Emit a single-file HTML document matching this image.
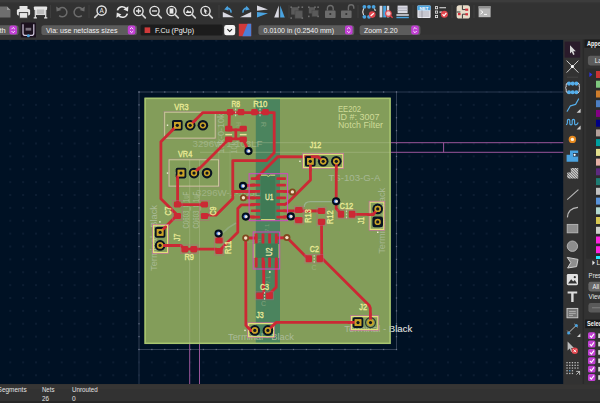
<!DOCTYPE html>
<html><head><meta charset="utf-8"><title>PCB Editor</title>
<style>
html,body{margin:0;padding:0;background:#323232;}
body{width:600px;height:403px;overflow:hidden;font-family:"Liberation Sans",sans-serif;}
svg{display:block;position:absolute;left:0;top:0;}
</style></head><body>
<svg width="600" height="403" viewBox="0 0 600 403">
<defs>
<pattern id="grid" x="10.25" y="1.875" width="12.875" height="12.875" patternUnits="userSpaceOnUse">
<rect x="-0.6" y="-0.6" width="1.2" height="1.2" fill="#203048"/>
<rect x="12.275" y="-0.6" width="1.2" height="1.2" fill="#203048"/>
<rect x="-0.6" y="12.275" width="1.2" height="1.2" fill="#203048"/>
<rect x="12.275" y="12.275" width="1.2" height="1.2" fill="#203048"/>
</pattern>
<clipPath id="cv"><rect x="0" y="39.5" width="563.6" height="344.7"/></clipPath>
<clipPath id="bd"><rect x="144.5" y="97.7" width="246.2" height="246.3"/></clipPath>
</defs>
<rect x="0" y="0" width="600" height="403" fill="#323232"/>

<g clip-path="url(#cv)">
<rect x="0" y="39.5" width="563.6" height="345" fill="#001124"/>
<rect x="0" y="39.5" width="563.6" height="345" fill="url(#grid)"/>
<rect x="139" y="92" width="257.5" height="257.5" fill="none" stroke="#3f4b60" stroke-width="0.8"/>
<rect x="138.45" y="91.45" width="1.1" height="1.1" fill="#6a7588"/>
<rect x="138.45" y="348.95" width="1.1" height="1.1" fill="#6a7588"/>
<rect x="138.45" y="91.45" width="1.1" height="1.1" fill="#6a7588"/>
<rect x="395.95" y="91.45" width="1.1" height="1.1" fill="#6a7588"/>
<rect x="151.32" y="91.45" width="1.1" height="1.1" fill="#6a7588"/>
<rect x="151.32" y="348.95" width="1.1" height="1.1" fill="#6a7588"/>
<rect x="138.45" y="104.33" width="1.1" height="1.1" fill="#6a7588"/>
<rect x="395.95" y="104.33" width="1.1" height="1.1" fill="#6a7588"/>
<rect x="164.20" y="91.45" width="1.1" height="1.1" fill="#6a7588"/>
<rect x="164.20" y="348.95" width="1.1" height="1.1" fill="#6a7588"/>
<rect x="138.45" y="117.20" width="1.1" height="1.1" fill="#6a7588"/>
<rect x="395.95" y="117.20" width="1.1" height="1.1" fill="#6a7588"/>
<rect x="177.07" y="91.45" width="1.1" height="1.1" fill="#6a7588"/>
<rect x="177.07" y="348.95" width="1.1" height="1.1" fill="#6a7588"/>
<rect x="138.45" y="130.07" width="1.1" height="1.1" fill="#6a7588"/>
<rect x="395.95" y="130.07" width="1.1" height="1.1" fill="#6a7588"/>
<rect x="189.95" y="91.45" width="1.1" height="1.1" fill="#6a7588"/>
<rect x="189.95" y="348.95" width="1.1" height="1.1" fill="#6a7588"/>
<rect x="138.45" y="142.95" width="1.1" height="1.1" fill="#6a7588"/>
<rect x="395.95" y="142.95" width="1.1" height="1.1" fill="#6a7588"/>
<rect x="202.82" y="91.45" width="1.1" height="1.1" fill="#6a7588"/>
<rect x="202.82" y="348.95" width="1.1" height="1.1" fill="#6a7588"/>
<rect x="138.45" y="155.82" width="1.1" height="1.1" fill="#6a7588"/>
<rect x="395.95" y="155.82" width="1.1" height="1.1" fill="#6a7588"/>
<rect x="215.70" y="91.45" width="1.1" height="1.1" fill="#6a7588"/>
<rect x="215.70" y="348.95" width="1.1" height="1.1" fill="#6a7588"/>
<rect x="138.45" y="168.70" width="1.1" height="1.1" fill="#6a7588"/>
<rect x="395.95" y="168.70" width="1.1" height="1.1" fill="#6a7588"/>
<rect x="228.57" y="91.45" width="1.1" height="1.1" fill="#6a7588"/>
<rect x="228.57" y="348.95" width="1.1" height="1.1" fill="#6a7588"/>
<rect x="138.45" y="181.57" width="1.1" height="1.1" fill="#6a7588"/>
<rect x="395.95" y="181.57" width="1.1" height="1.1" fill="#6a7588"/>
<rect x="241.45" y="91.45" width="1.1" height="1.1" fill="#6a7588"/>
<rect x="241.45" y="348.95" width="1.1" height="1.1" fill="#6a7588"/>
<rect x="138.45" y="194.45" width="1.1" height="1.1" fill="#6a7588"/>
<rect x="395.95" y="194.45" width="1.1" height="1.1" fill="#6a7588"/>
<rect x="254.32" y="91.45" width="1.1" height="1.1" fill="#6a7588"/>
<rect x="254.32" y="348.95" width="1.1" height="1.1" fill="#6a7588"/>
<rect x="138.45" y="207.32" width="1.1" height="1.1" fill="#6a7588"/>
<rect x="395.95" y="207.32" width="1.1" height="1.1" fill="#6a7588"/>
<rect x="267.20" y="91.45" width="1.1" height="1.1" fill="#6a7588"/>
<rect x="267.20" y="348.95" width="1.1" height="1.1" fill="#6a7588"/>
<rect x="138.45" y="220.20" width="1.1" height="1.1" fill="#6a7588"/>
<rect x="395.95" y="220.20" width="1.1" height="1.1" fill="#6a7588"/>
<rect x="280.07" y="91.45" width="1.1" height="1.1" fill="#6a7588"/>
<rect x="280.07" y="348.95" width="1.1" height="1.1" fill="#6a7588"/>
<rect x="138.45" y="233.07" width="1.1" height="1.1" fill="#6a7588"/>
<rect x="395.95" y="233.07" width="1.1" height="1.1" fill="#6a7588"/>
<rect x="292.95" y="91.45" width="1.1" height="1.1" fill="#6a7588"/>
<rect x="292.95" y="348.95" width="1.1" height="1.1" fill="#6a7588"/>
<rect x="138.45" y="245.95" width="1.1" height="1.1" fill="#6a7588"/>
<rect x="395.95" y="245.95" width="1.1" height="1.1" fill="#6a7588"/>
<rect x="305.82" y="91.45" width="1.1" height="1.1" fill="#6a7588"/>
<rect x="305.82" y="348.95" width="1.1" height="1.1" fill="#6a7588"/>
<rect x="138.45" y="258.82" width="1.1" height="1.1" fill="#6a7588"/>
<rect x="395.95" y="258.82" width="1.1" height="1.1" fill="#6a7588"/>
<rect x="318.70" y="91.45" width="1.1" height="1.1" fill="#6a7588"/>
<rect x="318.70" y="348.95" width="1.1" height="1.1" fill="#6a7588"/>
<rect x="138.45" y="271.70" width="1.1" height="1.1" fill="#6a7588"/>
<rect x="395.95" y="271.70" width="1.1" height="1.1" fill="#6a7588"/>
<rect x="331.57" y="91.45" width="1.1" height="1.1" fill="#6a7588"/>
<rect x="331.57" y="348.95" width="1.1" height="1.1" fill="#6a7588"/>
<rect x="138.45" y="284.57" width="1.1" height="1.1" fill="#6a7588"/>
<rect x="395.95" y="284.57" width="1.1" height="1.1" fill="#6a7588"/>
<rect x="344.45" y="91.45" width="1.1" height="1.1" fill="#6a7588"/>
<rect x="344.45" y="348.95" width="1.1" height="1.1" fill="#6a7588"/>
<rect x="138.45" y="297.45" width="1.1" height="1.1" fill="#6a7588"/>
<rect x="395.95" y="297.45" width="1.1" height="1.1" fill="#6a7588"/>
<rect x="357.32" y="91.45" width="1.1" height="1.1" fill="#6a7588"/>
<rect x="357.32" y="348.95" width="1.1" height="1.1" fill="#6a7588"/>
<rect x="138.45" y="310.32" width="1.1" height="1.1" fill="#6a7588"/>
<rect x="395.95" y="310.32" width="1.1" height="1.1" fill="#6a7588"/>
<rect x="370.20" y="91.45" width="1.1" height="1.1" fill="#6a7588"/>
<rect x="370.20" y="348.95" width="1.1" height="1.1" fill="#6a7588"/>
<rect x="138.45" y="323.20" width="1.1" height="1.1" fill="#6a7588"/>
<rect x="395.95" y="323.20" width="1.1" height="1.1" fill="#6a7588"/>
<rect x="383.07" y="91.45" width="1.1" height="1.1" fill="#6a7588"/>
<rect x="383.07" y="348.95" width="1.1" height="1.1" fill="#6a7588"/>
<rect x="138.45" y="336.07" width="1.1" height="1.1" fill="#6a7588"/>
<rect x="395.95" y="336.07" width="1.1" height="1.1" fill="#6a7588"/>
<rect x="395.95" y="91.45" width="1.1" height="1.1" fill="#6a7588"/>
<rect x="395.95" y="348.95" width="1.1" height="1.1" fill="#6a7588"/>
<rect x="138.45" y="348.95" width="1.1" height="1.1" fill="#6a7588"/>
<rect x="395.95" y="348.95" width="1.1" height="1.1" fill="#6a7588"/>
<path d="M396.5 92H563.6M139 349.5V384.2" stroke="#34415a" stroke-width="0.8" fill="none"/>
<path d="M390.7 142.7H563.6M390.7 152.3H563.6M443.6 142.7V152.3M189.7 344V384.2M199.5 344V384.2" stroke="#9a559b" stroke-width="1" fill="none"/>
<rect x="144.5" y="97.7" width="246.2" height="246.3" fill="#839d5a"/>
<rect x="255.8" y="97.7" width="24.2" height="246.3" fill="#4b845e"/>
<rect x="145.2" y="98.4" width="244.8" height="244.9" fill="none" stroke="#a7c56f" stroke-width="1.5"/>
<g clip-path="url(#bd)">
<path d="M200 142.7H390.7M200 152.3H390.7M189.7 160V344M199.5 160V344" stroke="#b7c59a" stroke-width="0.7" fill="none" opacity="0.55"/>
<path d="M218.7 120V186M230 150V200" stroke="#b7c59a" stroke-width="0.6" fill="none" opacity="0.35"/>
</g>
<text x="192.5" y="146.6" font-size="8.5" fill="#a9bb93" font-family="Liberation Sans, sans-serif" textLength="70" lengthAdjust="spacingAndGlyphs" opacity="0.75" >3296W-1-103LF</text>
<text x="196" y="195.8" font-size="8.5" fill="#a9bb93" font-family="Liberation Sans, sans-serif" textLength="70" lengthAdjust="spacingAndGlyphs" opacity="0.75" >3296W-1-103LF</text>
<text x="328.4" y="180.6" font-size="8.6" fill="#a9ba98" font-family="Liberation Sans, sans-serif" textLength="52" lengthAdjust="spacingAndGlyphs" opacity="0.95" >TS-103-G-A</text>
<text x="228" y="339.7" font-size="8.6" fill="#aebd9e" font-family="Liberation Sans, sans-serif" textLength="66" lengthAdjust="spacingAndGlyphs" opacity="0.95" >Terminal - Black</text>
<text x="344.2" y="332" font-size="8.6" fill="#aebd9e" font-family="Liberation Sans, sans-serif" textLength="68" lengthAdjust="spacingAndGlyphs" opacity="0.95" >Terminal - Black</text>
<text x="156.6" y="271" font-size="8.6" fill="#aebd9e" font-family="Liberation Sans, sans-serif" textLength="66" lengthAdjust="spacingAndGlyphs" transform="rotate(-90 156.6 271)" opacity="0.9" >Terminal - Black</text>
<text x="384.6" y="253.8" font-size="8.6" fill="#aebd9e" font-family="Liberation Sans, sans-serif" textLength="66" lengthAdjust="spacingAndGlyphs" transform="rotate(-90 384.6 253.8)" opacity="0.85" >Terminal - Black</text>
<text x="224.2" y="153.5" font-size="8.5" fill="#b3c2a2" font-family="Liberation Sans, sans-serif" textLength="40" lengthAdjust="spacingAndGlyphs" transform="rotate(-90 224.2 153.5)" opacity="0.7" >10k-0-10k</text>
<text x="237.2" y="153.5" font-size="8.5" fill="#b3c2a2" font-family="Liberation Sans, sans-serif" textLength="12" lengthAdjust="spacingAndGlyphs" transform="rotate(-90 237.2 153.5)" opacity="0.6" >10k</text>
<text x="199.2" y="228.4" font-size="8.5" fill="#b3c2a2" font-family="Liberation Sans, sans-serif" textLength="36.6" lengthAdjust="spacingAndGlyphs" transform="rotate(-90 199.2 228.4)" opacity="0.8" >C0603_0.1uF</text>
<text x="189.3" y="228.4" font-size="8.5" fill="#b3c2a2" font-family="Liberation Sans, sans-serif" textLength="36.6" lengthAdjust="spacingAndGlyphs" transform="rotate(-90 189.3 228.4)" opacity="0.8" >C0603_0.1uF</text>
<text x="261" y="122" font-size="7" fill="#a9bb93" font-family="Liberation Sans, sans-serif" transform="rotate(90 261 122)" opacity="0.6" >R</text>
<text x="236" y="122" font-size="7" fill="#a9bb93" font-family="Liberation Sans, sans-serif" transform="rotate(90 236 122)" opacity="0.45" >R</text>
<text x="311.5" y="269.5" font-size="7" fill="#a9bb93" font-family="Liberation Sans, sans-serif" opacity="0.6" >C</text>
<text x="261" y="306" font-size="7" fill="#a9bb93" font-family="Liberation Sans, sans-serif" opacity="0.6" >C</text>
<text x="247" y="243" font-size="6" fill="#a9bb93" font-family="Liberation Sans, sans-serif" textLength="14" lengthAdjust="spacingAndGlyphs" opacity="0.35" >0.1uF</text>
<text x="269" y="232" font-size="6" fill="#a9bb93" font-family="Liberation Sans, sans-serif" transform="rotate(-90 269 232)" opacity="0.5" >7.1</text>
<text x="270" y="284" font-size="6" fill="#a9bb93" font-family="Liberation Sans, sans-serif" transform="rotate(-90 270 284)" opacity="0.5" >7.1</text>
<rect x="164.0" y="111.5" width="51.9" height="27.3" fill="none" stroke="#b070a0" stroke-width="0.6" opacity="0.6"/>
<rect x="164.7" y="112.2" width="50.5" height="25.9" fill="none" stroke="#d3cda2" stroke-width="0.9"/>
<rect x="168.4" y="159.1" width="50.9" height="27.7" fill="none" stroke="#b070a0" stroke-width="0.6" opacity="0.6"/>
<rect x="169.1" y="159.8" width="49.5" height="26.3" fill="none" stroke="#d3cda2" stroke-width="0.9"/>
<rect x="166.8" y="124.5" width="1.4" height="1.4" fill="#f0f0d8"/>
<rect x="166.8" y="172.4" width="1.4" height="1.4" fill="#f0f0d8"/>
<rect x="175" y="172.4" width="1.2" height="1.2" fill="#d8d8b8" opacity="0.7"/>
<rect x="172" y="124.5" width="1.2" height="1.2" fill="#d8d8b8" opacity="0.7"/>
<polyline points="177.3,125.3 160.9,141.7 160.9,198.7 177.3,215.1" fill="none" stroke="#cb2934" stroke-width="2.8" stroke-linecap="round" stroke-linejoin="round"/>
<polyline points="177.3,215.1 160.1,232.3" fill="none" stroke="#cb2934" stroke-width="2.8" stroke-linecap="round" stroke-linejoin="round"/>
<polyline points="190.2,125.3 202.9,112.6 274.2,112.6 274.2,152.8 266.3,160.7 232.8,160.7 232.8,198.4 216.0,215.2 204.5,215.2" fill="none" stroke="#cb2934" stroke-width="2.8" stroke-linecap="round" stroke-linejoin="round"/>
<polyline points="229.4,112.6 229.0,129.5" fill="none" stroke="#cb2934" stroke-width="2.8" stroke-linecap="round" stroke-linejoin="round"/>
<polyline points="228.7,129.8 243.2,129.8" fill="none" stroke="#cb2934" stroke-width="2.8" stroke-linecap="round" stroke-linejoin="round"/>
<polyline points="228.7,138.8 243.2,138.8" fill="none" stroke="#cb2934" stroke-width="2.8" stroke-linecap="round" stroke-linejoin="round"/>
<polyline points="235.8,129.8 235.8,138.8" fill="none" stroke="#cb2934" stroke-width="2.8" stroke-linecap="round" stroke-linejoin="round"/>
<polyline points="227.5,140.5 195.5,172.5 194.0,173.1" fill="none" stroke="#cb2934" stroke-width="2.8" stroke-linecap="round" stroke-linejoin="round"/>
<polyline points="244.0,141.0 248.5,151.2" fill="none" stroke="#cb2934" stroke-width="2.8" stroke-linecap="round" stroke-linejoin="round"/>
<polyline points="181.0,173.1 177.6,176.5 177.6,204.7" fill="none" stroke="#cb2934" stroke-width="2.8" stroke-linecap="round" stroke-linejoin="round"/>
<polyline points="177.6,204.7 204.4,204.7" fill="none" stroke="#cb2934" stroke-width="2.8" stroke-linecap="round" stroke-linejoin="round"/>
<polyline points="160.1,245.5 181.0,245.5 184.6,249.1 216.5,249.1 219.0,251.0 237.8,232.2 237.8,208.5 241.5,204.8 254.0,204.8" fill="none" stroke="#cb2934" stroke-width="2.8" stroke-linecap="round" stroke-linejoin="round"/>
<polyline points="218.6,233.6 219.0,240.3" fill="none" stroke="#cb2934" stroke-width="2.8" stroke-linecap="round" stroke-linejoin="round"/>
<polyline points="254.0,191.5 232.8,191.5" fill="none" stroke="#cb2934" stroke-width="2.8" stroke-linecap="round" stroke-linejoin="round"/>
<polyline points="254.0,185.0 243.0,185.8" fill="none" stroke="#cb2934" stroke-width="2.8" stroke-linecap="round" stroke-linejoin="round"/>
<polyline points="254.0,198.0 243.4,197.7" fill="none" stroke="#cb2934" stroke-width="2.8" stroke-linecap="round" stroke-linejoin="round"/>
<polyline points="254.0,217.0 245.8,216.6" fill="none" stroke="#cb2934" stroke-width="2.8" stroke-linecap="round" stroke-linejoin="round"/>
<polyline points="256.0,178.6 278.1,156.6 318.0,156.8 323.2,161.3" fill="none" stroke="#cb2934" stroke-width="2.8" stroke-linecap="round" stroke-linejoin="round"/>
<polyline points="310.3,161.3 310.5,180.0 287.5,203.1 285.0,204.3" fill="none" stroke="#cb2934" stroke-width="2.8" stroke-linecap="round" stroke-linejoin="round"/>
<polyline points="336.3,161.3 336.2,208.5 341.0,213.6" fill="none" stroke="#cb2934" stroke-width="2.8" stroke-linecap="round" stroke-linejoin="round"/>
<polyline points="352.0,214.4 373.2,214.4 377.7,208.8" fill="none" stroke="#cb2934" stroke-width="2.8" stroke-linecap="round" stroke-linejoin="round"/>
<polyline points="284.0,210.9 298.8,210.9 321.5,211.0" fill="none" stroke="#cb2934" stroke-width="2.8" stroke-linecap="round" stroke-linejoin="round"/>
<polyline points="321.5,221.8 321.7,256.5 321.7,258.0 369.3,305.6 370.3,308.0 370.5,322.5" fill="none" stroke="#cb2934" stroke-width="2.8" stroke-linecap="round" stroke-linejoin="round"/>
<polyline points="284.0,191.3 292.2,191.9" fill="none" stroke="#cb2934" stroke-width="2.8" stroke-linecap="round" stroke-linejoin="round"/>
<polyline points="284.0,217.0 290.7,216.5" fill="none" stroke="#cb2934" stroke-width="2.8" stroke-linecap="round" stroke-linejoin="round"/>
<polyline points="290.7,217.3 298.8,220.1" fill="none" stroke="#cb2934" stroke-width="2.8" stroke-linecap="round" stroke-linejoin="round"/>
<polyline points="256.2,238.0 245.7,238.0 245.9,325.3 251.0,330.5 254.8,330.5" fill="none" stroke="#cb2934" stroke-width="2.8" stroke-linecap="round" stroke-linejoin="round"/>
<polyline points="276.3,238.0 286.9,237.6 308.0,258.8" fill="none" stroke="#cb2934" stroke-width="2.8" stroke-linecap="round" stroke-linejoin="round"/>
<polyline points="263.7,262.0 263.7,292.5" fill="none" stroke="#cb2934" stroke-width="2.8" stroke-linecap="round" stroke-linejoin="round"/>
<polyline points="276.2,262.0 276.2,287.2 270.6,292.8" fill="none" stroke="#cb2934" stroke-width="2.8" stroke-linecap="round" stroke-linejoin="round"/>
<polyline points="267.9,330.5 276.0,322.4 358.0,322.4" fill="none" stroke="#cb2934" stroke-width="2.8" stroke-linecap="round" stroke-linejoin="round"/>
<path d="M336 201.6H310.5Q304.2 201.6 304.2 207" fill="none" stroke="#9db79b" stroke-width="1.3" opacity="0.8"/>
<path d="M222.6 233Q229 226.5 236 223" fill="none" stroke="#9db79b" stroke-width="1.6" opacity="0.5"/>
<rect x="226.9" y="109.1" width="6.6" height="6.2" rx="1.3" fill="#cb2934"/>
<rect x="237.7" y="109.1" width="6.6" height="6.2" rx="1.3" fill="#cb2934"/>
<rect x="251.2" y="109.1" width="6.6" height="6.2" rx="1.3" fill="#cb2934"/>
<rect x="262.2" y="109.1" width="6.6" height="6.2" rx="1.3" fill="#cb2934"/>
<rect x="225.0" y="125.8" width="7.4" height="5.8" rx="1.3" fill="#cb2934"/>
<rect x="225.0" y="136.5" width="7.4" height="5.8" rx="1.3" fill="#cb2934"/>
<rect x="225.29999999999998" y="133.9" width="6.8" height="1.4" fill="#e9e39a"/>
<rect x="239.5" y="125.8" width="7.4" height="5.8" rx="1.3" fill="#cb2934"/>
<rect x="239.5" y="136.5" width="7.4" height="5.8" rx="1.3" fill="#cb2934"/>
<rect x="239.79999999999998" y="133.9" width="6.8" height="1.4" fill="#e9e39a"/>
<path d="M235.6 108.4V117" stroke="#d4d8c4" stroke-width="1.2" stroke-dasharray="1.8 1.2" opacity="0.85"/>
<path d="M260.0 108.4V117" stroke="#d4d8c4" stroke-width="1.2" stroke-dasharray="1.8 1.2" opacity="0.85"/>
<rect x="173.8" y="201.6" width="7.2" height="5.8" rx="1.3" fill="#cb2934"/>
<rect x="173.8" y="213.0" width="7.2" height="6.0" rx="1.3" fill="#cb2934"/>
<rect x="172.7" y="200.6" width="9.4" height="19.6" fill="none" stroke="#c65a86" stroke-width="0.6" opacity="0.7"/>
<rect x="200.9" y="201.6" width="7.2" height="5.8" rx="1.3" fill="#cb2934"/>
<rect x="200.9" y="213.0" width="7.2" height="6.0" rx="1.3" fill="#cb2934"/>
<rect x="199.8" y="200.6" width="9.4" height="19.6" fill="none" stroke="#c65a86" stroke-width="0.6" opacity="0.7"/>
<rect x="181.4" y="246.0" width="6.8" height="6.4" rx="1.3" fill="#cb2934"/>
<rect x="190.4" y="246.0" width="6.8" height="6.4" rx="1.3" fill="#cb2934"/>
<rect x="180.6" y="245.0" width="17.4" height="8.4" fill="none" stroke="#c65a86" stroke-width="0.6" opacity="0.7"/>
<rect x="215.3" y="237.5" width="7.4" height="6.0" rx="1.3" fill="#cb2934"/>
<rect x="215.3" y="247.9" width="7.4" height="6.2" rx="1.3" fill="#cb2934"/>
<rect x="214.5" y="236.7" width="9.0" height="18.3" fill="none" stroke="#c65a86" stroke-width="0.6" opacity="0.7"/>
<rect x="295.1" y="207.0" width="7.4" height="6.0" rx="1.3" fill="#cb2934"/>
<rect x="295.1" y="217.0" width="7.4" height="6.2" rx="1.3" fill="#cb2934"/>
<rect x="294.3" y="206.2" width="9.0" height="17.8" fill="none" stroke="#c65a86" stroke-width="0.6" opacity="0.7"/>
<rect x="317.8" y="208.0" width="7.4" height="6.0" rx="1.3" fill="#cb2934"/>
<rect x="317.8" y="218.7" width="7.4" height="6.2" rx="1.3" fill="#cb2934"/>
<rect x="317.0" y="207.2" width="9.0" height="18.5" fill="none" stroke="#c65a86" stroke-width="0.6" opacity="0.7"/>
<rect x="337.8" y="210.7" width="6.4" height="7.0" rx="1.3" fill="#cb2934"/>
<rect x="348.7" y="210.7" width="6.6" height="7.0" rx="1.3" fill="#cb2934"/>
<rect x="337.0" y="210.0" width="19.0" height="8.4" fill="none" stroke="#c65a86" stroke-width="0.6" opacity="0.7"/>
<rect x="305.6" y="255.3" width="6.4" height="7.0" rx="1.3" fill="#cb2934"/>
<rect x="316.5" y="255.3" width="6.4" height="7.0" rx="1.3" fill="#cb2934"/>
<rect x="305.0" y="254.6" width="18.5" height="8.4" fill="none" stroke="#c65a86" stroke-width="0.6" opacity="0.7"/>
<rect x="256.2" y="292.5" width="7.2" height="6.6" rx="1.3" fill="#cb2934"/>
<rect x="265.7" y="292.5" width="7.2" height="6.6" rx="1.3" fill="#cb2934"/>
<rect x="255.6" y="291.8" width="17.9" height="8.0" fill="none" stroke="#c65a86" stroke-width="0.6" opacity="0.7"/>
<path d="M346.5 210.39999999999998V218.2" stroke="#d4d8c4" stroke-width="1.2" stroke-dasharray="1.8 1.2" opacity="0.85"/>
<path d="M314.2 255.0V262.8" stroke="#d4d8c4" stroke-width="1.2" stroke-dasharray="1.8 1.2" opacity="0.85"/>
<path d="M264.55 292.0V299.8" stroke="#d4d8c4" stroke-width="1.2" stroke-dasharray="1.8 1.2" opacity="0.85"/>
<rect x="260.6" y="175.5" width="14.6" height="44" fill="#3f7a55"/>
<rect x="249.1" y="173.7" width="38.5" height="47.0" fill="none" stroke="#d246c4" stroke-width="1.0"/>
<path d="M261 175.2H266.3Q268.3 177.6 270.3 175.2H275.2" fill="none" stroke="#d9dc7c" stroke-width="1"/>
<path d="M261 219.6H275.2" fill="none" stroke="#d9dc7c" stroke-width="1"/>
<rect x="250.8" y="177.25" width="9.4" height="2.7" rx="0.7" fill="#cb2934"/>
<rect x="276.4" y="177.25" width="9.6" height="2.7" rx="0.7" fill="#cb2934"/>
<rect x="250.8" y="183.68" width="9.4" height="2.7" rx="0.7" fill="#cb2934"/>
<rect x="276.4" y="183.68" width="9.6" height="2.7" rx="0.7" fill="#cb2934"/>
<rect x="250.8" y="190.11" width="9.4" height="2.7" rx="0.7" fill="#cb2934"/>
<rect x="276.4" y="190.11" width="9.6" height="2.7" rx="0.7" fill="#cb2934"/>
<rect x="250.8" y="196.54" width="9.4" height="2.7" rx="0.7" fill="#cb2934"/>
<rect x="276.4" y="196.54" width="9.6" height="2.7" rx="0.7" fill="#cb2934"/>
<rect x="250.8" y="202.97" width="9.4" height="2.7" rx="0.7" fill="#cb2934"/>
<rect x="276.4" y="202.97" width="9.6" height="2.7" rx="0.7" fill="#cb2934"/>
<rect x="250.8" y="209.40" width="9.4" height="2.7" rx="0.7" fill="#cb2934"/>
<rect x="276.4" y="209.40" width="9.6" height="2.7" rx="0.7" fill="#cb2934"/>
<rect x="250.8" y="215.83" width="9.4" height="2.7" rx="0.7" fill="#cb2934"/>
<rect x="276.4" y="215.83" width="9.6" height="2.7" rx="0.7" fill="#cb2934"/>
<rect x="255.8" y="243.5" width="24.2" height="14.4" fill="#3f7a55"/>
<rect x="253.2" y="232.0" width="26.5" height="37.0" fill="none" stroke="#d246c4" stroke-width="1.0"/>
<path d="M254.2 244V258M278.8 244V258" fill="none" stroke="#d9dc7c" stroke-width="0.8" opacity="0.8"/>
<rect x="254.80" y="233.6" width="2.8" height="10" rx="0.7" fill="#cb2934"/>
<rect x="254.80" y="257.6" width="2.8" height="10" rx="0.7" fill="#cb2934"/>
<rect x="261.60" y="233.6" width="2.8" height="10" rx="0.7" fill="#cb2934"/>
<rect x="261.60" y="257.6" width="2.8" height="10" rx="0.7" fill="#cb2934"/>
<rect x="268.20" y="233.6" width="2.8" height="10" rx="0.7" fill="#cb2934"/>
<rect x="268.20" y="257.6" width="2.8" height="10" rx="0.7" fill="#cb2934"/>
<rect x="274.90" y="233.6" width="2.8" height="10" rx="0.7" fill="#cb2934"/>
<rect x="274.90" y="257.6" width="2.8" height="10" rx="0.7" fill="#cb2934"/>
<circle cx="269.8" cy="272" r="1" fill="#f0e6b0"/>
<circle cx="248.5" cy="151.1" r="4.1" fill="#030d1c"/>
<circle cx="248.2" cy="151.1" r="2.0" fill="#4f7fe0"/>
<circle cx="248.9" cy="151.2" r="1.4" fill="#f4ead6"/>
<circle cx="243" cy="185.9" r="4.1" fill="#030d1c"/>
<circle cx="242.7" cy="185.9" r="2.0" fill="#4f7fe0"/>
<circle cx="243.4" cy="186.0" r="1.4" fill="#f4ead6"/>
<circle cx="245.8" cy="216.6" r="4.1" fill="#030d1c"/>
<circle cx="245.5" cy="216.6" r="2.0" fill="#4f7fe0"/>
<circle cx="246.20000000000002" cy="216.7" r="1.4" fill="#f4ead6"/>
<circle cx="218.6" cy="233.5" r="4.1" fill="#030d1c"/>
<circle cx="218.29999999999998" cy="233.5" r="2.0" fill="#4f7fe0"/>
<circle cx="219.0" cy="233.6" r="1.4" fill="#f4ead6"/>
<circle cx="290.8" cy="216.4" r="4.1" fill="#030d1c"/>
<circle cx="290.5" cy="216.4" r="2.0" fill="#4f7fe0"/>
<circle cx="291.2" cy="216.5" r="1.4" fill="#f4ead6"/>
<circle cx="336.1" cy="201.3" r="4.1" fill="#030d1c"/>
<circle cx="335.8" cy="201.3" r="2.0" fill="#4f7fe0"/>
<circle cx="336.5" cy="201.4" r="1.4" fill="#f4ead6"/>
<circle cx="243.4" cy="197.7" r="3.5" fill="#80491f"/>
<circle cx="243.4" cy="197.7" r="1.7" fill="#f3e2c6"/>
<circle cx="292.4" cy="191.9" r="3.5" fill="#80491f"/>
<circle cx="292.4" cy="191.9" r="1.7" fill="#f3e2c6"/>
<circle cx="245.7" cy="238" r="3.5" fill="#80491f"/>
<circle cx="245.7" cy="238" r="1.7" fill="#f3e2c6"/>
<circle cx="286.9" cy="237.6" r="3.5" fill="#80491f"/>
<circle cx="286.9" cy="237.6" r="1.7" fill="#f3e2c6"/>
<rect x="172.0" y="120.0" width="10.6" height="10.6" rx="1.8" fill="#0a1422"/>
<rect x="174.0" y="122.0" width="6.6" height="6.6" fill="#c9a227"/>
<circle cx="177.3" cy="125.3" r="1.6" fill="#101622"/>
<circle cx="190.2" cy="125.3" r="5.3" fill="#0a1422"/>
<circle cx="190.2" cy="125.3" r="3.15" fill="#c9a227"/>
<circle cx="190.2" cy="125.3" r="1.6" fill="#101622"/>
<circle cx="202.9" cy="125.3" r="5.3" fill="#0a1422"/>
<circle cx="202.9" cy="125.3" r="3.15" fill="#c9a227"/>
<circle cx="202.9" cy="125.3" r="1.6" fill="#101622"/>
<rect x="175.7" y="167.79999999999998" width="10.6" height="10.6" rx="1.8" fill="#0a1422"/>
<rect x="177.7" y="169.79999999999998" width="6.6" height="6.6" fill="#c9a227"/>
<circle cx="181" cy="173.1" r="1.6" fill="#101622"/>
<circle cx="194" cy="173.1" r="5.3" fill="#0a1422"/>
<circle cx="194" cy="173.1" r="3.15" fill="#c9a227"/>
<circle cx="194" cy="173.1" r="1.6" fill="#101622"/>
<circle cx="207" cy="173.1" r="5.3" fill="#0a1422"/>
<circle cx="207" cy="173.1" r="3.15" fill="#c9a227"/>
<circle cx="207" cy="173.1" r="1.6" fill="#101622"/>
<rect x="153.5" y="225.2" width="14.1" height="27.4" fill="none" stroke="#e3e07a" stroke-width="1.3"/>
<rect x="152.6" y="224.3" width="15.9" height="29.2" fill="none" stroke="#c76aa6" stroke-width="0.6"/>
<rect x="154.79999999999998" y="227.1" width="10.6" height="10.6" rx="1.8" fill="#0a1422"/>
<rect x="156.79999999999998" y="229.1" width="6.6" height="6.6" fill="#c9a227"/>
<circle cx="160.1" cy="232.4" r="1.6" fill="#101622"/>
<circle cx="160.1" cy="245.4" r="5.3" fill="#0a1422"/>
<circle cx="160.1" cy="245.4" r="3.15" fill="#c9a227"/>
<circle cx="160.1" cy="245.4" r="1.6" fill="#101622"/>
<rect x="159.2" y="221.2" width="1.4" height="1.4" fill="#f0f0d8"/>
<rect x="303.6" y="154.3" width="39.2" height="13.3" fill="none" stroke="#e3e07a" stroke-width="1.3"/>
<rect x="302.7" y="153.4" width="41.0" height="15.1" fill="none" stroke="#c76aa6" stroke-width="0.6"/>
<rect x="305.0" y="156.0" width="10.6" height="10.6" rx="1.8" fill="#0a1422"/>
<rect x="307.0" y="158.0" width="6.6" height="6.6" fill="#c9a227"/>
<circle cx="310.3" cy="161.3" r="1.6" fill="#101622"/>
<circle cx="323.2" cy="161.3" r="5.3" fill="#0a1422"/>
<circle cx="323.2" cy="161.3" r="3.15" fill="#c9a227"/>
<circle cx="323.2" cy="161.3" r="1.6" fill="#101622"/>
<circle cx="336.3" cy="161.3" r="5.3" fill="#0a1422"/>
<circle cx="336.3" cy="161.3" r="3.15" fill="#c9a227"/>
<circle cx="336.3" cy="161.3" r="1.6" fill="#101622"/>
<rect x="299.2" y="160.6" width="1.4" height="1.4" fill="#f0f0d8"/>
<rect x="370.0" y="202.1" width="13.9" height="27.3" fill="none" stroke="#e3e07a" stroke-width="1.3"/>
<rect x="369.1" y="201.2" width="15.7" height="29.1" fill="none" stroke="#c76aa6" stroke-width="0.6"/>
<circle cx="377.7" cy="208.9" r="5.3" fill="#0a1422"/>
<circle cx="377.7" cy="208.9" r="3.15" fill="#c9a227"/>
<circle cx="377.7" cy="208.9" r="1.6" fill="#101622"/>
<rect x="372.4" y="216.6" width="10.6" height="10.6" rx="2.2" fill="#0a1422"/>
<circle cx="377.7" cy="221.9" r="3.15" fill="#c9a227"/>
<circle cx="377.7" cy="221.9" r="1.6" fill="#101622"/>
<rect x="377" y="231.6" width="1.4" height="1.4" fill="#f0f0d8"/>
<rect x="248.6" y="323.6" width="25.1" height="13.2" fill="none" stroke="#e3e07a" stroke-width="1.3"/>
<rect x="247.7" y="322.7" width="26.9" height="15.0" fill="none" stroke="#c76aa6" stroke-width="0.6"/>
<circle cx="254.8" cy="330.4" r="5.3" fill="#0a1422"/>
<circle cx="254.8" cy="330.4" r="3.15" fill="#c9a227"/>
<circle cx="254.8" cy="330.4" r="1.6" fill="#101622"/>
<circle cx="267.9" cy="330.4" r="5.3" fill="#0a1422"/>
<circle cx="267.9" cy="330.4" r="3.15" fill="#c9a227"/>
<circle cx="267.9" cy="330.4" r="1.6" fill="#101622"/>
<rect x="244.3" y="329.7" width="1.4" height="1.4" fill="#f0f0d8"/>
<rect x="351.4" y="316.6" width="26.5" height="13.1" fill="none" stroke="#e3e07a" stroke-width="1.3"/>
<rect x="350.5" y="315.7" width="28.3" height="14.9" fill="none" stroke="#c76aa6" stroke-width="0.6"/>
<rect x="352.7" y="317.3" width="10.6" height="10.6" rx="1.8" fill="#0a1422"/>
<rect x="354.7" y="319.3" width="6.6" height="6.6" fill="#c9a227"/>
<circle cx="358" cy="322.6" r="1.6" fill="#101622"/>
<circle cx="370.5" cy="322.6" r="5" fill="none" stroke="#0a1422" stroke-width="1.1" opacity="0.75"/>
<circle cx="370.5" cy="322.6" r="3.15" fill="#c9a227"/>
<circle cx="370.5" cy="322.6" r="1.6" fill="#101622"/>
<polyline points="177.3,125.3 172.0,130.6" fill="none" stroke="#cb2934" stroke-width="2.8" stroke-linecap="round" stroke-linejoin="round"/>
<polyline points="190.2,125.3 195.5,120.0" fill="none" stroke="#cb2934" stroke-width="2.8" stroke-linecap="round" stroke-linejoin="round"/>
<polyline points="181.0,173.1 177.6,176.5 177.6,180.0" fill="none" stroke="#cb2934" stroke-width="2.8" stroke-linecap="round" stroke-linejoin="round"/>
<polyline points="194.0,173.1 199.0,168.1" fill="none" stroke="#cb2934" stroke-width="2.8" stroke-linecap="round" stroke-linejoin="round"/>
<polyline points="160.1,232.3 165.5,226.9" fill="none" stroke="#cb2934" stroke-width="2.8" stroke-linecap="round" stroke-linejoin="round"/>
<polyline points="160.1,245.5 170.0,245.5" fill="none" stroke="#cb2934" stroke-width="2.8" stroke-linecap="round" stroke-linejoin="round"/>
<polyline points="323.2,161.3 318.0,156.8 312.0,156.8" fill="none" stroke="#cb2934" stroke-width="2.8" stroke-linecap="round" stroke-linejoin="round"/>
<polyline points="310.3,161.3 310.5,170.0" fill="none" stroke="#cb2934" stroke-width="2.8" stroke-linecap="round" stroke-linejoin="round"/>
<polyline points="336.3,161.3 336.3,170.0" fill="none" stroke="#cb2934" stroke-width="2.8" stroke-linecap="round" stroke-linejoin="round"/>
<polyline points="377.7,208.8 373.2,214.6 368.0,214.6" fill="none" stroke="#cb2934" stroke-width="2.8" stroke-linecap="round" stroke-linejoin="round"/>
<polyline points="254.8,330.5 251.0,330.5 247.5,327.0" fill="none" stroke="#cb2934" stroke-width="2.8" stroke-linecap="round" stroke-linejoin="round"/>
<polyline points="267.9,330.5 275.0,323.4" fill="none" stroke="#cb2934" stroke-width="2.8" stroke-linecap="round" stroke-linejoin="round"/>
<polyline points="358.0,322.4 349.0,322.4" fill="none" stroke="#cb2934" stroke-width="2.8" stroke-linecap="round" stroke-linejoin="round"/>
<polyline points="370.5,322.5 370.4,314.0" fill="none" stroke="#cb2934" stroke-width="2.8" stroke-linecap="round" stroke-linejoin="round"/>
<rect x="174.0" y="122.0" width="6.6" height="6.6" fill="#c9a227"/>
<circle cx="177.3" cy="125.3" r="1.6" fill="#101622"/>
<circle cx="190.2" cy="125.3" r="3.15" fill="#c9a227"/>
<circle cx="190.2" cy="125.3" r="1.6" fill="#101622"/>
<rect x="177.7" y="169.79999999999998" width="6.6" height="6.6" fill="#c9a227"/>
<circle cx="181" cy="173.1" r="1.6" fill="#101622"/>
<circle cx="194" cy="173.1" r="3.15" fill="#c9a227"/>
<circle cx="194" cy="173.1" r="1.6" fill="#101622"/>
<rect x="156.79999999999998" y="229.1" width="6.6" height="6.6" fill="#c9a227"/>
<circle cx="160.1" cy="232.4" r="1.6" fill="#101622"/>
<circle cx="160.1" cy="245.4" r="3.15" fill="#c9a227"/>
<circle cx="160.1" cy="245.4" r="1.6" fill="#101622"/>
<rect x="307.0" y="158.0" width="6.6" height="6.6" fill="#c9a227"/>
<circle cx="310.3" cy="161.3" r="1.6" fill="#101622"/>
<circle cx="323.2" cy="161.3" r="3.15" fill="#c9a227"/>
<circle cx="323.2" cy="161.3" r="1.6" fill="#101622"/>
<circle cx="336.3" cy="161.3" r="3.15" fill="#c9a227"/>
<circle cx="336.3" cy="161.3" r="1.6" fill="#101622"/>
<circle cx="377.7" cy="208.9" r="3.15" fill="#c9a227"/>
<circle cx="377.7" cy="208.9" r="1.6" fill="#101622"/>
<circle cx="254.8" cy="330.4" r="3.15" fill="#c9a227"/>
<circle cx="254.8" cy="330.4" r="1.6" fill="#101622"/>
<circle cx="267.9" cy="330.4" r="3.15" fill="#c9a227"/>
<circle cx="267.9" cy="330.4" r="1.6" fill="#101622"/>
<rect x="354.7" y="319.3" width="6.6" height="6.6" fill="#c9a227"/>
<circle cx="358" cy="322.6" r="1.6" fill="#101622"/>
<circle cx="370.5" cy="322.6" r="3.15" fill="#c9a227"/>
<circle cx="370.5" cy="322.6" r="1.6" fill="#101622"/>
<text x="174.3" y="110.2" font-size="8.8" fill="#e9ea96" font-family="Liberation Sans, sans-serif" textLength="14.2" lengthAdjust="spacingAndGlyphs" stroke="#e9ea96" stroke-width="0.35" >VR3</text>
<text x="178.0" y="157.0" font-size="8.8" fill="#e9ea96" font-family="Liberation Sans, sans-serif" textLength="14.2" lengthAdjust="spacingAndGlyphs" stroke="#e9ea96" stroke-width="0.35" >VR4</text>
<text x="231.4" y="107.0" font-size="8.8" fill="#e9ea96" font-family="Liberation Sans, sans-serif" textLength="8.6" lengthAdjust="spacingAndGlyphs" stroke="#e9ea96" stroke-width="0.35" >R8</text>
<text x="253.2" y="107.0" font-size="8.8" fill="#e9ea96" font-family="Liberation Sans, sans-serif" textLength="14.2" lengthAdjust="spacingAndGlyphs" stroke="#e9ea96" stroke-width="0.35" >R10</text>
<text x="309.8" y="148.2" font-size="8.8" fill="#e9ea96" font-family="Liberation Sans, sans-serif" textLength="11.4" lengthAdjust="spacingAndGlyphs" stroke="#e9ea96" stroke-width="0.35" >J12</text>
<text x="339.6" y="208.6" font-size="8.8" fill="#e9ea96" font-family="Liberation Sans, sans-serif" textLength="13.6" lengthAdjust="spacingAndGlyphs" stroke="#e9ea96" stroke-width="0.35" >C12</text>
<text x="309.8" y="252.0" font-size="8.8" fill="#e9ea96" font-family="Liberation Sans, sans-serif" textLength="9" lengthAdjust="spacingAndGlyphs" stroke="#e9ea96" stroke-width="0.35" >C2</text>
<text x="260.0" y="290.0" font-size="8.8" fill="#e9ea96" font-family="Liberation Sans, sans-serif" textLength="9" lengthAdjust="spacingAndGlyphs" stroke="#e9ea96" stroke-width="0.35" >C3</text>
<text x="256.3" y="317.6" font-size="8.8" fill="#e9ea96" font-family="Liberation Sans, sans-serif" textLength="7.4" lengthAdjust="spacingAndGlyphs" stroke="#e9ea96" stroke-width="0.35" >J3</text>
<text x="359.2" y="309.7" font-size="8.8" fill="#e9ea96" font-family="Liberation Sans, sans-serif" textLength="7.8" lengthAdjust="spacingAndGlyphs" stroke="#e9ea96" stroke-width="0.35" >J2</text>
<text x="184.5" y="260.0" font-size="8.8" fill="#e9ea96" font-family="Liberation Sans, sans-serif" textLength="9.3" lengthAdjust="spacingAndGlyphs" stroke="#e9ea96" stroke-width="0.35" >R9</text>
<text x="265.0" y="199.6" font-size="8.8" fill="#e8e8a8" font-family="Liberation Sans, sans-serif" textLength="8.4" lengthAdjust="spacingAndGlyphs" stroke="#e8e8a8" stroke-width="0.35" >U1</text>
<text x="271.6" y="256.0" font-size="8.8" fill="#e8e8a8" font-family="Liberation Sans, sans-serif" textLength="8.4" lengthAdjust="spacingAndGlyphs" transform="rotate(-90 271.6 256.0)" stroke="#e8e8a8" stroke-width="0.35" >U2</text>
<text x="171.4" y="215.6" font-size="8.8" fill="#e9ea96" font-family="Liberation Sans, sans-serif" textLength="9" lengthAdjust="spacingAndGlyphs" transform="rotate(-90 171.4 215.6)" stroke="#e9ea96" stroke-width="0.35" >C7</text>
<text x="216.0" y="215.6" font-size="8.8" fill="#e9ea96" font-family="Liberation Sans, sans-serif" textLength="9" lengthAdjust="spacingAndGlyphs" transform="rotate(-90 216.0 215.6)" stroke="#e9ea96" stroke-width="0.35" >C9</text>
<text x="180.2" y="241.0" font-size="8.8" fill="#e9ea96" font-family="Liberation Sans, sans-serif" textLength="7.4" lengthAdjust="spacingAndGlyphs" transform="rotate(-90 180.2 241.0)" stroke="#e9ea96" stroke-width="0.35" >J7</text>
<text x="231.0" y="254.0" font-size="8.8" fill="#e9ea96" font-family="Liberation Sans, sans-serif" textLength="13" lengthAdjust="spacingAndGlyphs" transform="rotate(-90 231.0 254.0)" stroke="#e9ea96" stroke-width="0.35" >R11</text>
<text x="310.6" y="222.8" font-size="8.8" fill="#e9ea96" font-family="Liberation Sans, sans-serif" textLength="13.6" lengthAdjust="spacingAndGlyphs" transform="rotate(-90 310.6 222.8)" stroke="#e9ea96" stroke-width="0.35" >R13</text>
<text x="332.9" y="224.0" font-size="8.8" fill="#e9ea96" font-family="Liberation Sans, sans-serif" textLength="13.6" lengthAdjust="spacingAndGlyphs" transform="rotate(-90 332.9 224.0)" stroke="#e9ea96" stroke-width="0.35" >R12</text>
<text x="364.2" y="224.0" font-size="8.8" fill="#e9ea96" font-family="Liberation Sans, sans-serif" textLength="7" lengthAdjust="spacingAndGlyphs" transform="rotate(-90 364.2 224.0)" stroke="#e9ea96" stroke-width="0.35" >J1</text>
<text x="338" y="111.9" font-size="9.2" fill="#cfdb98" font-family="Liberation Sans, sans-serif" textLength="23" lengthAdjust="spacingAndGlyphs" >EE202</text>
<text x="338" y="120.2" font-size="9.2" fill="#cfdb98" font-family="Liberation Sans, sans-serif" textLength="41.6" lengthAdjust="spacingAndGlyphs" >ID #: 3007</text>
<text x="338" y="128.2" font-size="9.2" fill="#cfdb98" font-family="Liberation Sans, sans-serif" textLength="45" lengthAdjust="spacingAndGlyphs" >Notch Filter</text>
<clipPath id="ob"><rect x="391.6" y="320" width="40" height="20"/></clipPath>
<g clip-path="url(#ob)">
<text x="344.2" y="332" font-size="8.8" fill="#c3c8cf" font-family="Liberation Sans, sans-serif" textLength="68" lengthAdjust="spacingAndGlyphs" >Terminal - Black</text>
</g>
</g>
<rect x="0" y="0" width="600" height="39.5" fill="#323232"/>
<rect x="0" y="0" width="600" height="2.6" fill="#3c3c3c"/>
<rect x="0" y="2.6" width="600" height="0.8" fill="#363636"/>
<rect x="0" y="34.4" width="600" height="5.1" fill="#353535"/>
<rect x="50.1" y="5" width="0.8" height="13" fill="#424242"/>
<rect x="88.6" y="5" width="0.8" height="13" fill="#424242"/>
<rect x="218.6" y="5" width="0.8" height="13" fill="#424242"/>
<rect x="288.6" y="5" width="0.8" height="13" fill="#424242"/>
<rect x="357.6" y="5" width="0.8" height="13" fill="#424242"/>
<rect x="412.6" y="5" width="0.8" height="13" fill="#424242"/>
<rect x="451.6" y="5" width="0.8" height="13" fill="#424242"/>
<rect x="473.6" y="5" width="0.8" height="13" fill="#424242"/>
<path d="M-1 6.5H7L10.5 10V17.5H-1Z" fill="#6e6e6e"/><path d="M7 6.5V10H10.5Z" fill="#9a9a9a"/>
<rect x="19.5" y="6" width="8" height="4" fill="#e6e6e6"/>
<rect x="16.9" y="9" width="13.2" height="6.4" rx="1.6" fill="#e6e6e6"/>
<rect x="19.3" y="12.6" width="8.4" height="5.6" fill="#e6e6e6" stroke="#323232" stroke-width="0.9"/>
<rect x="33.9" y="6.4" width="13.2" height="3.6" rx="0.8" fill="#e6e6e6"/>
<rect x="36.5" y="9" width="8" height="5.6" fill="#bdbdbd" stroke="#e6e6e6" stroke-width="0.9"/>
<path d="M35.3 10V17.8M45.7 10V17.8M33.7 17.8H36.9M44.1 17.8H47.3" stroke="#e6e6e6" stroke-width="1.2" fill="none"/>
<path d="M58.8 9.2A4.6 4.6 0 1 1 59.2 15.6" fill="none" stroke="#6c6c6c" stroke-width="1.5"/><path d="M56.2 6.4L56.6 11.4L61.4 10Z" fill="#6c6c6c"/>
<path d="M82.2 9.2A4.6 4.6 0 1 0 81.8 15.6" fill="none" stroke="#6c6c6c" stroke-width="1.5"/><path d="M84.8 6.4L84.4 11.4L79.6 10Z" fill="#6c6c6c"/>
<circle cx="101.6" cy="10.6" r="4.6" fill="none" stroke="#e6e6e6" stroke-width="1.4"/>
<path d="M98.19999999999999 14.0L94.8 17.4" stroke="#d2d2d2" stroke-width="1.7" stroke-linecap="round"/>
<text x="101.6" y="13" font-size="6.4" fill="#e6e6e6" text-anchor="middle" font-family="Liberation Sans, sans-serif">A</text>
<g transform="translate(0 1)">
<path d="M117.4 9.4A5 5 0 0 1 126.4 8" fill="none" stroke="#e6e6e6" stroke-width="1.6"/><path d="M128.4 5.2L128 10.4L123.4 8.6Z" fill="#e6e6e6"/>
<path d="M127.4 12.6A5 5 0 0 1 118.4 14" fill="none" stroke="#e6e6e6" stroke-width="1.6"/><path d="M116.4 16.8L116.8 11.6L121.4 13.4Z" fill="#e6e6e6"/>
<circle cx="138.5" cy="10" r="4.6" fill="none" stroke="#e6e6e6" stroke-width="1.4"/>
<path d="M141.9 13.4L145.3 16.8" stroke="#d2d2d2" stroke-width="1.7" stroke-linecap="round"/>
<path d="M136 10H141M138.5 7.5V12.5" stroke="#e6e6e6" stroke-width="1.3"/>
<circle cx="154.5" cy="10" r="4.6" fill="none" stroke="#e6e6e6" stroke-width="1.4"/>
<path d="M157.9 13.4L161.3 16.8" stroke="#d2d2d2" stroke-width="1.7" stroke-linecap="round"/>
<path d="M152 10H157" stroke="#e6e6e6" stroke-width="1.3"/>
<circle cx="171.5" cy="10" r="4.6" fill="none" stroke="#e6e6e6" stroke-width="1.4"/>
<path d="M174.9 13.4L178.3 16.8" stroke="#d2d2d2" stroke-width="1.7" stroke-linecap="round"/>
<rect x="169.6" y="7.4" width="3.8" height="5.2" fill="#e6e6e6"/>
<circle cx="188.5" cy="10" r="4.6" fill="none" stroke="#e6e6e6" stroke-width="1.4"/>
<path d="M191.9 13.4L195.3 16.8" stroke="#d2d2d2" stroke-width="1.7" stroke-linecap="round"/>
<path d="M185.6 12L187.6 9L189.2 10.8L190.4 9.6L191.6 12Z" fill="#e6e6e6"/>
<circle cx="205.5" cy="10" r="4.6" fill="none" stroke="#e6e6e6" stroke-width="1.4"/>
<path d="M208.9 13.4L212.3 16.8" stroke="#d2d2d2" stroke-width="1.7" stroke-linecap="round"/>
<path d="M204.2 7.2L207.6 10.6H205.8L206.6 12.6L205.6 13L204.8 11L204.2 11.8Z" fill="#e6e6e6"/>
</g>
<path d="M222.8 12L222.8 17.2L234 17.2Z" fill="#d9d9e2"/>
<path d="M231 12.6A3.9 3.9 0 0 0 226.6 8.2" fill="none" stroke="#4aa3e0" stroke-width="1.6"/><path d="M224.2 9.6L227.6 5.8L228.6 10.4Z" fill="#4aa3e0"/>
<path d="M251.2 12L251.2 17.2L240 17.2Z" fill="#d9d9e2"/>
<path d="M243 12.6A3.9 3.9 0 0 1 247.4 8.2" fill="none" stroke="#4aa3e0" stroke-width="1.6"/><path d="M249.8 9.6L246.4 5.8L245.4 10.4Z" fill="#4aa3e0"/>
<path d="M257 5.6L268 9.6L257 10.8Z" fill="#d9d9e2"/><path d="M257 12L268 13.2L257 17.6Z" fill="#4aa3e0"/>
<path d="M278.8 5.4V17.6H274.2Z" fill="#d9d9e2"/><path d="M280.2 5.4V17.6H284.8Z" fill="#4aa3e0"/>
<rect x="291.2" y="7.2" width="7.4" height="7.4" fill="#5a5a5a"/>
<rect x="295.0" y="10.8" width="7.4" height="7.4" fill="#5a5a5a" stroke="#484848" stroke-width="0.6"/>
<rect x="290.4" y="6.4" width="1.6" height="1.6" fill="#6e6e6e"/>
<rect x="297.8" y="6.4" width="1.6" height="1.6" fill="#6e6e6e"/>
<rect x="290.4" y="17.3" width="1.6" height="1.6" fill="#6e6e6e"/>
<rect x="301.5" y="17.3" width="1.6" height="1.6" fill="#6e6e6e"/>
<rect x="301.5" y="6.4" width="1.6" height="1.6" fill="#6e6e6e"/>
<rect x="308.8" y="7.2" width="6.2" height="6.2" fill="#5a5a5a"/>
<rect x="312.0" y="10.2" width="6.2" height="6.2" fill="#5a5a5a" stroke="#484848" stroke-width="0.6"/>
<rect x="308.0" y="6.4" width="1.6" height="1.6" fill="#6e6e6e"/>
<rect x="314.2" y="6.4" width="1.6" height="1.6" fill="#6e6e6e"/>
<rect x="308.0" y="15.6" width="1.6" height="1.6" fill="#6e6e6e"/>
<rect x="317.3" y="15.6" width="1.6" height="1.6" fill="#6e6e6e"/>
<rect x="317.3" y="6.4" width="1.6" height="1.6" fill="#6e6e6e"/>
<rect x="325" y="10.6" width="10.6" height="7.4" rx="0.8" fill="#6c6c6c"/><path d="M327.4 10.6V8.4A2.9 2.9 0 0 1 333.2 8.4V10.6" fill="none" stroke="#6c6c6c" stroke-width="1.4"/>
<rect x="341" y="10.6" width="10.6" height="7.4" rx="0.8" fill="#6c6c6c"/><path d="M348.4 10.6V7.4A2.7 2.7 0 0 1 353.8 7.4V8.8" fill="none" stroke="#6c6c6c" stroke-width="1.4"/>
<circle cx="330.3" cy="14" r="1.1" fill="#323232"/><circle cx="346.3" cy="14" r="1.1" fill="#323232"/>
<circle cx="364.4" cy="6.8" r="1.9" fill="#4aa3e0"/>
<circle cx="369" cy="6.8" r="1.9" fill="#4aa3e0"/>
<circle cx="373.6" cy="6.8" r="1.9" fill="#4aa3e0"/>
<circle cx="364.4" cy="16.8" r="1.9" fill="#4aa3e0"/>
<circle cx="369" cy="16.8" r="1.9" fill="#4aa3e0"/>
<path d="M363.6 8.6Q362 11.8 363.6 15M374.4 8.6Q375.4 10 375.2 11" fill="none" stroke="#e6e6e6" stroke-width="1.1"/>
<circle cx="372.2" cy="14.6" r="3.3" fill="#e0444c"/><path d="M370.6 16L373.8 13.2" stroke="#fff" stroke-width="1.2"/>
<rect x="379.6" y="5.8" width="2.8" height="11.6" fill="#d9d9e2"/><rect x="383.2" y="5.8" width="2.8" height="11.6" fill="#4aa3e0"/><rect x="386.8" y="5.8" width="2.4" height="11.6" fill="#d9d9e2"/>
<circle cx="388.4" cy="13.6" r="2.8" fill="#f3c9cf" stroke="#e0444c" stroke-width="1.1"/><path d="M390.4 15.6L392.6 17.8" stroke="#e0444c" stroke-width="1.4"/>
<rect x="397.6" y="5.6" width="10" height="7.6" fill="#d9d9e2"/><path d="M397.6 8H407.6M397.6 10.4H407.6" stroke="#9a9aa6" stroke-width="0.7"/>
<rect x="396.4" y="14.2" width="12.4" height="1.6" fill="#d9d9e2"/><rect x="396.4" y="16.8" width="12.4" height="1.4" fill="#4aa3e0"/>
<rect x="417.4" y="5.6" width="13.2" height="12.4" rx="1" fill="#e9e9f0"/><rect x="417.4" y="5.6" width="13.2" height="4.6" rx="1" fill="#4aa3e0"/>
<text x="424" y="9.7" font-size="4.4" font-weight="bold" fill="#fff" text-anchor="middle" font-family="Liberation Sans, sans-serif">NET</text>
<path d="M418.6 12H429.4M418.6 14H429.4M418.6 16H429.4M422 10.4V17.6" stroke="#8b8b96" stroke-width="0.7"/>
<rect x="435.4" y="6.6" width="2.2" height="2.2" fill="none" stroke="#e6e6e6" stroke-width="0.8"/>
<rect x="435.4" y="11" width="2.2" height="2.2" fill="none" stroke="#e6e6e6" stroke-width="0.8"/>
<rect x="435.4" y="15.4" width="2.2" height="2.2" fill="none" stroke="#e6e6e6" stroke-width="0.8"/>
<path d="M439.4 7.7H446M439.4 12.1H442" stroke="#e6e6e6" stroke-width="1.1"/>
<circle cx="444.4" cy="14.2" r="3.5" fill="#e0444c"/><path d="M442.6 14.2L444 15.8L446.4 12.8" fill="none" stroke="#fff" stroke-width="1.1"/>
<rect x="456.6" y="5.2" width="13.4" height="13.4" rx="2.6" fill="#e7dcc9"/>
<path d="M462.4 5.2V9.6H466.4M466.4 14.2H462.4V18.6M456.6 12H460.4" stroke="#3a3a3a" stroke-width="1" fill="none"/>
<rect x="465.2" y="8.6" width="3" height="2.2" fill="#d8313c"/><rect x="458" y="13" width="2.6" height="2.2" fill="#d8313c"/><rect x="465.4" y="13.2" width="2.6" height="2.2" fill="#d8313c"/>
<rect x="478.6" y="6.2" width="12" height="11" fill="#b9b9b9"/><rect x="478.6" y="6.2" width="12" height="2.2" fill="#8e8e8e"/>
<path d="M480.6 10.4L483 12.2L480.6 14M484 14.4H487" stroke="#fff" stroke-width="0.9" fill="none"/>
<rect x="-6" y="25.2" width="24.6" height="9.8" rx="2.6" fill="#5c5c5c"/>
<text x="-0.6" y="32.7" font-size="7.2" fill="#f2f2f2" font-family="Liberation Sans, sans-serif" textLength="6.2" lengthAdjust="spacingAndGlyphs" >th</text>
<rect x="9.4" y="25.6" width="7.6" height="9" rx="2" fill="#c13fd3"/>
<path d="M11.5 29.200000000000003L13.2 27.5L14.899999999999999 29.200000000000003M11.5 31.0L13.2 32.7L14.899999999999999 31.0" fill="none" stroke="#fff" stroke-width="0.9"/>
<rect x="20.8" y="22.6" width="15.2" height="15" rx="1.2" fill="#1b111e"/>
<path d="M23 24.2V33.2Q23 35.4 25.2 35.4H31.6Q33.8 35.4 33.8 33.2V24.2" fill="none" stroke="#d0c6dc" stroke-width="1.2"/>
<rect x="25.6" y="27.8" width="5.6" height="2.8" fill="#77707c"/>
<circle cx="28.4" cy="35.8" r="1.5" fill="#4aa3e0"/>
<rect x="41.4" y="25.2" width="95.6" height="9.8" rx="2.6" fill="#5c5c5c"/>
<text x="46" y="32.7" font-size="7.2" fill="#f2f2f2" font-family="Liberation Sans, sans-serif" textLength="71.5" lengthAdjust="spacingAndGlyphs" >Via: use netclass sizes</text>
<rect x="127.8" y="25.6" width="7.6" height="9" rx="2" fill="#c13fd3"/>
<path d="M129.9 29.200000000000003L131.6 27.5L133.29999999999998 29.200000000000003M129.9 31.0L131.6 32.7L133.29999999999998 31.0" fill="none" stroke="#fff" stroke-width="0.9"/>
<rect x="140.6" y="24.6" width="82" height="11" rx="1.5" fill="#1c1c1c"/>
<rect x="144.6" y="27.4" width="5.6" height="5.6" fill="#d03a3a"/>
<text x="155" y="32.9" font-size="7.4" fill="#f2f2f2" font-family="Liberation Sans, sans-serif" textLength="39" lengthAdjust="spacingAndGlyphs" >F.Cu (PgUp)</text>
<rect x="224.2" y="25" width="11" height="10.2" rx="2.2" fill="#f4f4f4"/><path d="M227.4 29.2L229.7 31.4L232 29.2" fill="none" stroke="#222" stroke-width="1.1"/>
<rect x="238.8" y="23.8" width="12.4" height="12.4" fill="#d03a3a"/><path d="M247.6 23.8H251.2V36.2H242.4Z" fill="#4c7fd6"/>
<rect x="258.4" y="25.2" width="95.80000000000001" height="9.8" rx="2.6" fill="#5c5c5c"/>
<text x="263.6" y="32.7" font-size="7.2" fill="#f2f2f2" font-family="Liberation Sans, sans-serif" textLength="70.4" lengthAdjust="spacingAndGlyphs" >0.0100 in (0.2540 mm)</text>
<rect x="345.0" y="25.6" width="7.6" height="9" rx="2" fill="#c13fd3"/>
<path d="M347.1 29.200000000000003L348.8 27.5L350.5 29.200000000000003M347.1 31.0L348.8 32.7L350.5 31.0" fill="none" stroke="#fff" stroke-width="0.9"/>
<rect x="359.6" y="25.2" width="60.799999999999955" height="9.8" rx="2.6" fill="#5c5c5c"/>
<text x="364" y="32.7" font-size="7.2" fill="#f2f2f2" font-family="Liberation Sans, sans-serif" textLength="33.6" lengthAdjust="spacingAndGlyphs" >Zoom 2.20</text>
<rect x="411.2" y="25.6" width="7.6" height="9" rx="2" fill="#c13fd3"/>
<path d="M413.3 29.200000000000003L415.0 27.5L416.7 29.200000000000003M413.3 31.0L415.0 32.7L416.7 31.0" fill="none" stroke="#fff" stroke-width="0.9"/>
<rect x="563.6" y="39.5" width="36.4" height="345" fill="#323232"/>
<rect x="582.6" y="39.5" width="1.4" height="345" fill="#292929"/>
<rect x="564.6" y="41.6" width="15.6" height="16" fill="#2a1b2b"/>
<path d="M570 45.2V53.4L571.8 51.8L573.2 54.9L574.6 54.3L573.2 51.3H575.8Z" fill="#d9d9d9"/>
<path d="M566.6 60.6L578.4 72.6M578.4 60.6L566.6 72.6" stroke="#dcdcdc" stroke-width="0.9"/><circle cx="572.4" cy="66.6" r="1.5" fill="#fff"/>
<rect x="567" y="76.8" width="11" height="0.7" fill="#4a4a4a"/>
<circle cx="568.9999999999999" cy="83.6" r="2.05" fill="#55aeea"/><circle cx="568.9999999999999" cy="92.3" r="2.05" fill="#55aeea"/>
<circle cx="572.6999999999999" cy="83.6" r="2.05" fill="#55aeea"/><circle cx="572.6999999999999" cy="92.3" r="2.05" fill="#55aeea"/>
<circle cx="576.4" cy="83.6" r="2.05" fill="#55aeea"/><circle cx="576.4" cy="92.3" r="2.05" fill="#55aeea"/>
<path d="M567.4 83Q565.8 83.4 566.2 85.6Q566.4 87.8 565.4 87.9Q566.4 88 566.2 90.2Q565.8 92.4 567.4 92.8M578 83Q579.6 83.4 579.2 85.6Q579 87.8 580 87.9Q579 88 579.2 90.2Q579.6 92.4 578 92.8" fill="none" stroke="#d8d8e0" stroke-width="1"/>
<path d="M567.2 111.2L570.4 105.8L575.6 104.4L578.6 99" fill="none" stroke="#55aeea" stroke-width="1.2" stroke-linejoin="round" stroke-linecap="round"/>
<path d="M580.6 108.8V112.8H576.6Z" fill="#d0d0d0"/>
<path d="M566 124.6Q567.4 124.6 567.4 122.8V120.4Q567.4 119.4 568.6 119.4Q569.8 119.4 569.8 120.4V123.8Q569.8 124.8 571 124.8Q572.2 124.8 572.2 123.8V120.4Q572.2 119.4 573.4 119.4Q574.6 119.4 574.6 120.4V123.8Q574.6 124.8 575.8 124.8Q577.2 124.8 578.2 122.6" fill="none" stroke="#55aeea" stroke-width="1.15"/>
<path d="M580.6 125.6V129.6H576.6Z" fill="#d0d0d0"/>
<circle cx="572.4" cy="139.4" r="3.7" fill="#e88a1f"/><circle cx="572.4" cy="139.4" r="1.7" fill="#fff4dc"/>
<path d="M566.6 161.8V154.8H570V150.6H578.2V161.8Z" fill="#4aa3e0"/><rect x="573" y="153" width="5.2" height="3.6" fill="#2a3f55"/><circle cx="574.6" cy="154.8" r="1.1" fill="#fff"/>
<clipPath id="ra"><path d="M567.2 178.6V172.4H570.8V168H578.2V178.6Z"/></clipPath>
<g clip-path="url(#ra)"><rect x="566" y="167" width="13" height="12" fill="#555"/>
<path d="M560 166L574 180M562.6 166L576.6 180M565.2 166L579.2 180M567.8 166L581.8 180M570.4 166L584.4 180M573 166L587 180M575.6 166L589.6 180M557.4 166L571.4 180" stroke="#d4d4d4" stroke-width="1.15"/></g>
<path d="M567.2 199.6L578.4 189.6" stroke="#b9b9b9" stroke-width="1.1"/>
<path d="M567.4 217.4Q567.8 208.4 578 207.4" fill="none" stroke="#b9b9b9" stroke-width="1.2"/>
<rect x="567.2" y="224.4" width="10.6" height="8.4" fill="#8e8e8e" stroke="#b9b9b9" stroke-width="0.9"/>
<circle cx="572.4" cy="246.2" r="5.2" fill="#8e8e8e" stroke="#b9b9b9" stroke-width="0.9"/>
<path d="M567.2 257.4L578 259.4L576.6 266.6L567.6 268L570.8 262.6Z" fill="#8e8e8e" stroke="#d0d0d0" stroke-width="1"/>
<rect x="566.8" y="274" width="11.2" height="11.2" rx="1.4" fill="#e1e1e1"/><path d="M568 283.6L571.2 279.2L573.2 281.6L574.8 280L577 283.6Z" fill="#323232"/><circle cx="574.8" cy="277.2" r="1.1" fill="#323232"/>
<path d="M567.6 291.4H577.2V293.6H573.6V302H571.2V293.6H567.6Z" fill="#dcdcdc"/>
<rect x="567" y="308.4" width="10.8" height="9.4" fill="#777" stroke="#d0d0d0" stroke-width="0.9"/><path d="M569 311.4H575.8M569 313.4H575.8M569 315.4H573" stroke="#cfcfcf" stroke-width="0.6"/>
<path d="M568.8 332.6L576 325.6" stroke="#d0d0d0" stroke-width="0.9"/><path d="M567.2 330.6L570.6 334.2M574.2 323.8L577.8 327.4" stroke="#bdbdbd" stroke-width="0.7"/>
<circle cx="576.4" cy="325.4" r="1.5" fill="#4aa3e0"/><circle cx="568.6" cy="333" r="1.5" fill="#4aa3e0"/><path d="M580.4 333.6V337H577Z" fill="#d0d0d0"/>
<path d="M567.6 341.4V350.6L569.8 348.6L571.2 352L572.6 351.4L571.2 348H574Z" fill="#bdbdbd"/><circle cx="574.8" cy="350.8" r="3.2" fill="#e0444c"/><path d="M573.4 349.4L576.2 352.2M576.2 349.4L573.4 352.2" stroke="#fff" stroke-width="0.9"/>
<rect x="566.4" y="362.0" width="1.3" height="1.3" fill="#bdbdbd"/>
<rect x="566.4" y="364.7" width="1.3" height="1.3" fill="#bdbdbd"/>
<rect x="566.4" y="367.4" width="1.3" height="1.3" fill="#bdbdbd"/>
<rect x="566.4" y="370.1" width="1.3" height="1.3" fill="#bdbdbd"/>
<rect x="566.4" y="372.8" width="1.3" height="1.3" fill="#bdbdbd"/>
<rect x="569.1" y="362.0" width="1.3" height="1.3" fill="#bdbdbd"/>
<rect x="569.1" y="364.7" width="1.3" height="1.3" fill="#bdbdbd"/>
<rect x="569.1" y="367.4" width="1.3" height="1.3" fill="#bdbdbd"/>
<rect x="569.1" y="370.1" width="1.3" height="1.3" fill="#4aa3e0"/>
<rect x="569.1" y="372.8" width="1.3" height="1.3" fill="#bdbdbd"/>
<rect x="571.8" y="362.0" width="1.3" height="1.3" fill="#bdbdbd"/>
<rect x="571.8" y="364.7" width="1.3" height="1.3" fill="#bdbdbd"/>
<rect x="571.8" y="367.4" width="1.3" height="1.3" fill="#bdbdbd"/>
<rect x="571.8" y="370.1" width="1.3" height="1.3" fill="#bdbdbd"/>
<rect x="571.8" y="372.8" width="1.3" height="1.3" fill="#bdbdbd"/>
<rect x="574.5" y="362.0" width="1.3" height="1.3" fill="#bdbdbd"/>
<rect x="574.5" y="364.7" width="1.3" height="1.3" fill="#bdbdbd"/>
<rect x="574.5" y="367.4" width="1.3" height="1.3" fill="#bdbdbd"/>
<rect x="577.2" y="362.0" width="1.3" height="1.3" fill="#bdbdbd"/>
<rect x="577.2" y="364.7" width="1.3" height="1.3" fill="#bdbdbd"/>
<rect x="577.2" y="367.4" width="1.3" height="1.3" fill="#bdbdbd"/>
<path d="M576.2 371.4H579.6V374.8M579.6 371.4L576.4 374.6" stroke="#d8d8d8" stroke-width="0.8" fill="none"/>
<rect x="584.4" y="39.5" width="15.6" height="345" fill="#323232"/>
<rect x="584.4" y="39.5" width="15.6" height="8.2" fill="#1b1b1b"/>
<text x="587" y="46.1" font-size="6.6" fill="#f4f4f4" font-family="Liberation Sans, sans-serif" textLength="13.8" lengthAdjust="spacingAndGlyphs" font-weight="bold" >Appe</text>
<rect x="587.9" y="55.7" width="20" height="9.8" rx="2.4" fill="#5c5c5c"/>
<text x="594.8" y="62.9" font-size="6.6" fill="#f0f0f0" font-family="Liberation Sans, sans-serif" textLength="18" lengthAdjust="spacingAndGlyphs" >Layers</text>
<rect x="586.4" y="68.6" width="14" height="190" fill="#2c2c2c"/>
<path d="M589.4 72.2L592.4 74.6L589.4 77Z" fill="#2a35e8"/>
<rect x="596" y="71.0" width="6" height="7" fill="#c83434"/>
<rect x="596" y="80.7" width="6" height="7" fill="#7fc87f"/>
<rect x="596" y="90.5" width="6" height="7" fill="#ce7d2c"/>
<rect x="596" y="100.2" width="6" height="7" fill="#4d7fc4"/>
<rect x="596" y="109.9" width="6" height="7" fill="#840084"/>
<rect x="596" y="119.7" width="6" height="7" fill="#000084"/>
<rect x="596" y="129.4" width="6" height="7" fill="#b4a09a"/>
<rect x="596" y="139.1" width="6" height="7" fill="#00a0a0"/>
<rect x="596" y="148.9" width="6" height="7" fill="#e4e08e"/>
<rect x="596" y="158.6" width="6" height="7" fill="#e8b2a7"/>
<rect x="596" y="168.3" width="6" height="7" fill="#5e2b80"/>
<rect x="596" y="178.1" width="6" height="7" fill="#1f7d74"/>
<rect x="596" y="187.8" width="6" height="7" fill="#c2c2c2"/>
<rect x="596" y="197.6" width="6" height="7" fill="#5994dc"/>
<rect x="596" y="207.3" width="6" height="7" fill="#b4dbd2"/>
<rect x="596" y="217.0" width="6" height="7" fill="#d8c852"/>
<rect x="596" y="226.8" width="6" height="7" fill="#d0d2cd"/>
<rect x="596" y="236.5" width="6" height="7" fill="#ff26e2"/>
<rect x="596" y="246.2" width="6" height="7" fill="#ff26e2"/>
<rect x="596" y="256.0" width="6" height="3" fill="#26e9ff"/>
<path d="M592.4 260.4L595 262.8L592.4 265.2Z" fill="#e8e8e8"/>
<text x="596.6" y="265.2" font-size="6.6" fill="#e8e8e8" font-family="Liberation Sans, sans-serif" >Layer Display</text>
<text x="588.6" y="278.2" font-size="6.6" fill="#e8e8e8" font-family="Liberation Sans, sans-serif" textLength="20.5" lengthAdjust="spacingAndGlyphs" >Presets</text>
<rect x="588.4" y="281.8" width="20" height="9.6" rx="2.4" fill="#666"/>
<text x="592.6" y="288.9" font-size="6.6" fill="#f0f0f0" font-family="Liberation Sans, sans-serif" textLength="26" lengthAdjust="spacingAndGlyphs" >All Layers</text>
<text x="588.6" y="299.4" font-size="6.6" fill="#e8e8e8" font-family="Liberation Sans, sans-serif" textLength="27.5" lengthAdjust="spacingAndGlyphs" >Viewports</text>
<rect x="588.4" y="303" width="20" height="9.6" rx="2.4" fill="#5a5a5a"/>
<rect x="592" y="307.4" width="10" height="0.8" fill="#8a8a8a"/>
<rect x="585.2" y="319.6" width="15.6" height="8.6" fill="#1b1b1b"/>
<text x="587.1" y="326.4" font-size="6.6" fill="#f4f4f4" font-family="Liberation Sans, sans-serif" textLength="14.6" lengthAdjust="spacingAndGlyphs" font-weight="bold" >Selec</text>
<rect x="588" y="332.2" width="7.4" height="6.9" rx="1.5" fill="#c13fd3"/>
<path d="M589.8 335.7L591.4 337.4L594 333.9" fill="none" stroke="#fff" stroke-width="1.1"/>
<rect x="598.2" y="333.4" width="2" height="4.6" fill="#d8d8d8"/>
<rect x="588" y="340.6" width="7.4" height="6.9" rx="1.5" fill="#c13fd3"/>
<path d="M589.8 344.1L591.4 345.8L594 342.3" fill="none" stroke="#fff" stroke-width="1.1"/>
<rect x="598.2" y="341.8" width="2" height="4.6" fill="#d8d8d8"/>
<rect x="588" y="348.9" width="7.4" height="6.9" rx="1.5" fill="#c13fd3"/>
<path d="M589.8 352.4L591.4 354.1L594 350.6" fill="none" stroke="#fff" stroke-width="1.1"/>
<rect x="598.2" y="350.1" width="2" height="4.6" fill="#d8d8d8"/>
<rect x="588" y="357.3" width="7.4" height="6.9" rx="1.5" fill="#c13fd3"/>
<path d="M589.8 360.8L591.4 362.5L594 359.0" fill="none" stroke="#fff" stroke-width="1.1"/>
<rect x="598.2" y="358.5" width="2" height="4.6" fill="#d8d8d8"/>
<rect x="588" y="365.7" width="7.4" height="6.9" rx="1.5" fill="#c13fd3"/>
<path d="M589.8 369.2L591.4 370.9L594 367.4" fill="none" stroke="#fff" stroke-width="1.1"/>
<rect x="598.2" y="366.9" width="2" height="4.6" fill="#d8d8d8"/>
<rect x="588" y="374.0" width="7.4" height="6.9" rx="1.5" fill="#c13fd3"/>
<path d="M589.8 377.5L591.4 379.2L594 375.7" fill="none" stroke="#fff" stroke-width="1.1"/>
<rect x="598.2" y="375.2" width="2" height="4.6" fill="#d8d8d8"/>
<rect x="0" y="384.2" width="600" height="18.8" fill="#323232"/>
<rect x="0" y="384.2" width="600" height="5" fill="#363534"/>
<rect x="0" y="401.2" width="600" height="1.8" fill="#262626"/>
<text x="-2.4" y="392.4" font-size="6.6" fill="#e4e4e4" font-family="Liberation Sans, sans-serif" textLength="29" lengthAdjust="spacingAndGlyphs" >Segments</text>
<text x="42" y="392.4" font-size="6.6" fill="#e4e4e4" font-family="Liberation Sans, sans-serif" textLength="12.4" lengthAdjust="spacingAndGlyphs" >Nets</text>
<text x="72" y="392.4" font-size="6.6" fill="#e4e4e4" font-family="Liberation Sans, sans-serif" textLength="25.6" lengthAdjust="spacingAndGlyphs" >Unrouted</text>
<text x="42" y="401.4" font-size="6.6" fill="#e4e4e4" font-family="Liberation Sans, sans-serif" textLength="7" lengthAdjust="spacingAndGlyphs" >26</text>
<text x="72" y="401.4" font-size="6.6" fill="#e4e4e4" font-family="Liberation Sans, sans-serif" >0</text>
</svg></body></html>
